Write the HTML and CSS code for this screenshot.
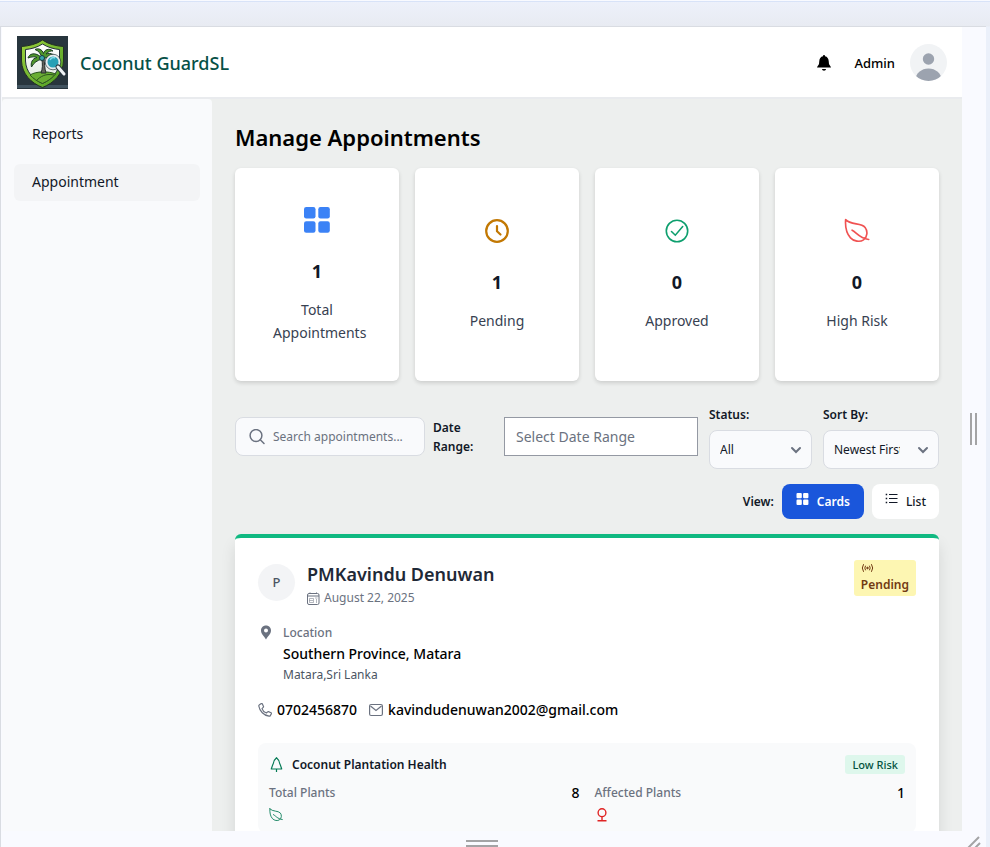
FILE: index.html
```html
<!DOCTYPE html>
<html lang="en">
<head>
<meta charset="utf-8">
<title>Coconut GuardSL - Manage Appointments</title>
<link rel="stylesheet" href="styles.css">
</head>
<body>
<svg class="defs" aria-hidden="true">
  <symbol id="leaf" viewBox="0 0 16 16"><path d="M1 1C.7 5 1.500 9.500 4 12.200C6 14.400 9.800 15 12 13.500C14.500 11.700 14.700 8 13 5.800C10.500 2.800 4.200 4.500 1 1ZM5 7.500C7.500 8.600 9.200 12.300 15.200 13.200" fill="none" stroke="currentColor" stroke-linecap="round" stroke-linejoin="round"/></symbol>
  <symbol id="grid" viewBox="0 0 14 14"><g fill="currentColor"><rect x="0" y="0" width="6.200" height="6.200" rx="1.200"/><rect x="7.700" y="0" width="6.200" height="6.200" rx="1.200"/><rect x="0" y="7.700" width="6.200" height="6.200" rx="1.200"/><rect x="7.700" y="7.700" width="6.200" height="6.200" rx="1.200"/></g></symbol>
</svg>
<div class="frame">
  <div class="app">
    <header class="topbar">
      <svg class="logo" viewBox="0 0 51 53" role="img" aria-label="Coconut GuardSL logo">
        <defs>
          <linearGradient id="rim" x1="0" y1="0" x2="1" y2="1"><stop offset="0" stop-color="#9bd23c"/><stop offset="1" stop-color="#4c9a25"/></linearGradient>
          <linearGradient id="sky" x1="0" y1="0" x2="0" y2="1"><stop offset="0" stop-color="#fff"/><stop offset="1" stop-color="#dfe8df"/></linearGradient>
        </defs>
        <rect width="51" height="53" fill="#28353d"/>
        <rect y="49" width="51" height="3" fill="#41535f"/>
        <path d="M25.500 4C20 8 12 10 4.500 10.500V25C5 38 14 47 25.500 51.500C37 47 46 38 46.500 25V10.500C39 10 31 8 25.500 4Z" fill="url(#rim)" stroke="#223023"/>
        <path d="M25.500 8C20 11.500 14 13 8.500 13.500V25C9 36 16 43 25.500 47.500C35 43 42 36 42.500 25V13.500C37 13 31 11.500 25.500 8Z" fill="url(#sky)" stroke="#23303a"/>
        <path d="M13 39C19 35 32 35 38.500 38C35.500 42 31 45 25.500 47.500C20.500 45.500 16 42.500 13 39Z" fill="#69ad33" stroke="#2c551f"/>
        <path d="M20 44C26 38 32 38 37 39" fill="none" stroke="#2c551f"/>
        <path d="M24.500 22C26 28 25.500 33 24 37H29C27.500 32 27.500 27 27 22Z" fill="#65645f" stroke="#252e2b"/>
        <path d="M25 22C18 15 12 18 11 22C15 20.500 18 20.500 20 21.500C15 22.500 13.500 27 14.500 31C17 26.500 20 24.500 25 23C30 21 36 21 39 25C39 19 34 16 29 18C31 15.500 34 14.500 36 15C32 11.500 27 14 26.500 17.500C25 13 21 12 18 13.500C22 15 24 18 25 22Z" fill="#4f962b" stroke="#1d3d27"/>
        <circle cx="25" cy="22" r="2.500" fill="#36a5ad" stroke="#173a3e"/>
        <circle cx="36" cy="26" r="6.500" fill="#28a0b6" stroke="#e5ecee" stroke-width="2"/>
        <circle cx="36" cy="26" r="7.800" fill="none" stroke="#29373e" stroke-width=".7"/>
        <path d="M33 24C34 22 36 21 38 22" fill="none" stroke="#83dbe7" stroke-width="1.500"/>
        <path d="M41 31L47 38" stroke="#28343d" stroke-width="5" stroke-linecap="round"/><path d="M41 31L47 38" stroke="#eff3f5" stroke-width="3" stroke-linecap="round"/>
      </svg>
      <span class="brand">Coconut GuardSL</span>
      <button class="bell" aria-label="Notifications"><svg viewBox="0 0 14 16"><path d="M7 0C7.600 0 8 .5 8 1.300C10.400 1.800 11.500 3.700 11.700 6L12 9C12.200 10 14 11.500 14 12.500H0C0 11.500 1.800 10 2 9L2.300 6C2.500 3.700 3.600 1.800 6 1.300C6 .5 6.400 0 7 0ZM5 14H9C9 16.300 5 16.300 5 14Z"/></svg></button>
      <span class="user">Admin</span>
      <svg class="avatar" viewBox="0 0 37 37" role="img" aria-label="Profile"><defs><clipPath id="round"><circle cx="18.500" cy="18.500" r="18.500"/></clipPath></defs><g clip-path="url(#round)"><rect width="37" height="37" fill="#f1f3f5"/><circle cx="18.500" cy="15" r="5.700" fill="#9ca3af"/><ellipse cx="18.500" cy="36" rx="13" ry="11.500" fill="#9ca3af"/></g></svg>
    </header>
    <div class="body">
      <nav class="sidebar">
        <a href="#reports">Reports</a>
        <a href="#appointment" class="active">Appointment</a>
      </nav>
      <main class="main">
        <h1>Manage Appointments</h1>
        <section class="stats">
          <div class="stat"><svg class="blue"><use href="#grid"/></svg><strong>1</strong><span>Total Appointments</span></div>
          <div class="stat"><svg class="amber" viewBox="0 0 26 26" fill="none" stroke="currentColor"><circle cx="13" cy="13" r="10.800" stroke-width="2.200"/><path d="M13 8V13.300L16.500 16.500" stroke-width="2.200" stroke-linecap="round" stroke-linejoin="round"/></svg><strong>1</strong><span>Pending</span></div>
          <div class="stat"><svg class="green" viewBox="0 0 26 26" fill="none" stroke="currentColor" stroke-width="1.600"><circle cx="13" cy="13" r="10.700"/><path d="M7.500 13.500L11.300 17.200L18.700 8.500" stroke-linecap="round"/></svg><strong>0</strong><span>Approved</span></div>
          <div class="stat"><svg class="red"><use href="#leaf"/></svg><strong>0</strong><span>High Risk</span></div>
        </section>
        <section class="filters">
          <label class="search"><svg viewBox="0 0 16 16" fill="none" stroke="currentColor" stroke-width="1.500" stroke-linecap="round"><circle cx="7" cy="6.500" r="5.900"/><path d="M11.300 10.800L15 14.500"/></svg><input type="text" placeholder="Search appointments..." aria-label="Search appointments"></label>
          <label class="range-label" for="range">Date Range:</label>
          <input class="range" id="range" type="text" placeholder="Select Date Range">
          <div class="field status"><label for="status">Status:</label><div class="select"><select id="status"><option>All</option></select><svg viewBox="0 0 10 6"><path d="M1 1L5 5L9 1"/></svg></div></div>
          <div class="field sort"><label for="sort">Sort By:</label><div class="select"><select id="sort"><option>Newest First</option></select><svg viewBox="0 0 10 6"><path d="M1 1L5 5L9 1"/></svg></div></div>
        </section>
        <div class="views">
          <span>View:</span>
          <button class="cards"><svg><use href="#grid"/></svg>Cards</button>
          <button class="list"><svg viewBox="0 0 13 12" stroke="currentColor"><path d="M4 1.500H12.500M4 5.500H12.500M4 9.500H12.500" stroke-width="1"/><path d="M.7 1.500H2.200M.7 5.500H2.200M.7 9.500H2.200" stroke-width="1.600"/></svg>List</button>
        </div>
        <article class="card">
          <div class="person">
            <div class="initial">P</div>
            <div class="who">
              <h2>PMKavindu Denuwan</h2>
              <p><svg viewBox="0 0 13 13" fill="none" stroke="currentColor"><rect x=".5" y="1.500" width="11.500" height="11" rx="1.500"/><path d="M.5 4H12M3 .5V2M9.500 .5V2"/><path d="M2.500 6.500H6.500V10.500H2.500ZM8 6H10.500M9.500 7V11M2.500 8.500H6" stroke-opacity=".5"/></svg>August 22, 2025</p>
            </div>
            <div class="badge"><svg viewBox="0 0 13 10" fill="none" stroke="currentColor"><circle cx="6.500" cy="5" r=".8" fill="currentColor"/><path d="M4.600 2.700Q3 5 4.600 7.300M8.400 2.700Q10 5 8.400 7.300M2.600 1.200Q0 5 2.600 8.800M10.400 1.200Q13 5 10.400 8.800"/></svg>Pending</div>
          </div>
          <div class="location">
            <svg viewBox="0 0 12 15"><path fill="currentColor" fill-rule="evenodd" d="M6 .5C9 .5 11 2.700 11 5.500C11 9 8 11 6 14.500C4 11 1 9 1 5.500C1 2.700 3 .5 6 .5ZM6 3.500A2 2 0 1 0 6 7.500A2 2 0 1 0 6 3.500Z"/></svg>
            <div><p class="caption">Location</p><p class="place">Southern Province, Matara</p><p class="city">Matara,Sri Lanka</p></div>
          </div>
          <div class="contact">
            <span><svg viewBox="0 0 14 14" fill="none" stroke="currentColor" stroke-width="1.200" stroke-linejoin="round"><path d="M1.500 1.700L3.300 .6Q4 .3 4.400 1L5.500 3.500Q5.700 4 5.200 4.400L4 5.600C4.600 7.500 6.500 9.400 8.400 10L9.600 8.800Q10 8.400 10.500 8.600L13 9.700Q13.600 10 13.400 10.700L12.300 12.600Q11.900 13.300 11 13.200C6 12.500 1.500 8 .8 3Q.7 2.200 1.500 1.700Z"/></svg>0702456870</span>
            <span><svg viewBox="0 0 14 14" fill="none" stroke="currentColor" stroke-width="1.200"><rect x=".6" y="1.500" width="12.800" height="11" rx="1.500"/><path d="M1.500 3L7 7.500L12.500 3"/></svg>kavindudenuwan2002@gmail.com</span>
          </div>
          <section class="health">
            <div class="health-head">
              <svg viewBox="0 0 12 15" fill="none" stroke="currentColor" stroke-width="1.200" stroke-linejoin="round"><path d="M6 .7C7 1.500 8.800 4.500 9.200 6.500C9.600 7.200 10.600 10 11.200 12H.8C1.400 10 2.400 7.200 2.800 6.500C3.200 4.500 5 1.500 6 .7ZM6 12V15"/></svg>
              <h3>Coconut Plantation Health</h3>
              <span class="risk">Low Risk</span>
            </div>
            <dl>
              <div><dt>Total Plants</dt><dd>8</dd><svg class="pine"><use href="#leaf"/></svg></div>
              <div><dt>Affected Plants</dt><dd>1</dd><svg class="crimson" viewBox="0 0 14 14" fill="none" stroke="currentColor" stroke-width="1.400"><circle cx="7" cy="4.700" r="3.900"/><path d="M7 8.600V12.700M2.500 12.700H11.500"/></svg></div>
            </dl>
          </section>
        </article>
      </main>
    </div>
  </div>
  <div class="gutter side"><svg class="grip" viewBox="0 0 8 32"><path d="M1 0V32M6 0V32"/></svg></div>
  <div class="gutter"><svg class="grip flat" viewBox="0 0 32 8"><path d="M0 2H32M0 7H32"/></svg></div>
  <div class="gutter"><svg class="grip corner" viewBox="0 0 16 16"><path d="M1 14L13 2M7 15L14 8"/></svg></div>
</div>
</body>
</html>
```
FILE: styles.css
```css
* { box-sizing: border-box; }
body { margin: 0; height: 100vh; overflow: hidden; background: linear-gradient(#edf1fb, #e8ebf2 26px, #ebf0fa 27px); box-shadow: inset 0 1px #f8faff, inset 0 2px #d8e3f8; font-family: "Noto Sans", sans-serif; color: #111827; font-size: 14px; }
h1, h2, h3, p, dl, dd, dt { margin: 0; }
button, input, select { font: inherit; color: inherit; }
svg { display: block; flex: none; }
.defs { position: absolute; width: 0; height: 0; }
.frame { margin: 26px 4px 0 0; height: calc(100vh - 18px); display: grid; grid-template: minmax(0, 1fr) 24px / minmax(0, 1fr) 24px; background: #f9faff; border: solid #d9dce2; border-width: 1px 0 0 1px; }
.app { overflow: hidden; display: flex; flex-direction: column; background: #edefee; border-left: 1px solid #f9faff; }
.gutter { display: flex; align-items: center; justify-content: center; }
.grip { width: 8px; height: 32px; fill: none; stroke: #a3a3a5; stroke-width: 2; }
.flat { width: 32px; height: 8px; }
.corner { width: 16px; height: 16px; }

.topbar { flex: none; height: 72px; display: flex; align-items: center; padding: 1px 15px 0; background: #fff; border-bottom: 2px solid #e9ebee; }
.logo { width: 51px; height: 53px; }
.brand { margin-left: 12px; margin-right: auto; font-size: 18px; font-weight: 500; color: #065046; }
.bell { border: 0; padding: 0; background: none; }
.bell svg { width: 14px; height: 16px; }
.user { margin: 0 15px 0 23px; font-size: 13px; font-weight: 500; color: #000; }
.avatar { width: 37px; height: 37px; }
.body { flex: 1; min-height: 0; display: flex; }
.sidebar { flex: none; width: 210px; padding: 17px 12px; display: flex; flex-direction: column; gap: 11px; background: #f9fafc; border-radius: 4px 4px 0 0; }
.sidebar a { height: 37px; padding: 0 18px; line-height: 36px; border-radius: 6px; color: #111827; text-decoration: none; }
.sidebar .active { background: #f3f4f6; }
.main { flex: 1; min-width: 0; padding: 22px 23px; }
h1 { font-size: 22px; font-weight: 600; line-height: 32px; color: #000; margin-bottom: 15px; }

.stats { display: grid; grid-template-columns: repeat(4, minmax(0, 1fr)); gap: 16px; }
.stat { min-height: 213px; padding: 0 38px; display: flex; flex-direction: column; justify-content: center; background: #fff; border-radius: 6px; box-shadow: 0 2px 4px rgba(0, 0, 0, .14); }
.stat svg { width: 26px; height: 28px; align-self: center; }
.stat strong { margin: 23px 0 13px; font-size: 18px; line-height: 28px; text-align: center; }
.stat span { line-height: 23px; color: #374151; text-align: center; }
.blue { color: #3b82f6; }
.amber { color: #c27803; }
.green { color: #0e9f6e; }
.red { color: #f05252; }

.filters { display: flex; align-items: center; margin-top: 23px; font-size: 12px; }
.filters input::placeholder { color: #6b7280; opacity: 1; }
.search { flex: 1; min-width: 0; height: 39px; display: flex; align-items: center; gap: 8px; padding: 0 13px; border: 1px solid #d9dce2; border-radius: 8px; background: #f9fafc; color: #6b7280; }
.search svg { width: 16px; height: 16px; }
.search input { flex: 1; min-width: 0; border: 0; padding: 0; background: none; outline: 0; }
.range-label { width: 60px; margin: 0 11px 0 8px; line-height: 19px; font-weight: 600; }
.range { width: 194px; height: 39px; padding: 0 11px; border: 1px solid #9499a3; background: #fff; font-size: 14px; }
.field { margin-left: 11px; display: flex; flex-direction: column; gap: 5px; }
.field label { line-height: 21px; font-weight: 600; }
.status { width: 103px; }
.sort { width: 116px; }
.select { display: grid; align-items: center; }
.select > * { grid-area: 1 / 1; }
.select select { appearance: none; width: 100%; height: 39px; padding: 0 38px 0 10px; border: 1px solid #d9dce2; border-radius: 8px; background: #f9fafc; }
.select svg { width: 10px; height: 6px; margin-right: 11px; justify-self: end; overflow: visible; fill: none; stroke: #6b7280; stroke-width: 2; stroke-linecap: round; pointer-events: none; }

.views { display: flex; align-items: center; justify-content: flex-end; gap: 8px; margin: 15px 0; font-size: 12px; font-weight: 600; }
.views button { display: flex; gap: 8px; padding: 0 13px; border: 0; border-radius: 8px; line-height: 35px; }
.views svg { width: 13px; height: 12px; margin-top: 9px; }
.views .cards { padding: 0 14px; background: #1a56db; color: #fff; }
.list { background: #fff; font-weight: 500; }

.card { border-top: 4px solid #10b981; border-radius: 6px; padding: 22px 23px; background: #fff; box-shadow: 0 10px 15px rgba(0, 0, 0, .1); }
.person { display: flex; align-items: flex-start; gap: 12px; }
.initial { width: 37px; height: 37px; margin-top: 4px; border-radius: 50%; background: #f3f4f6; color: #4b5563; text-align: center; line-height: 37px; font-size: 13px; font-weight: 500; }
.who { flex: 1; }
h2 { font-size: 18px; font-weight: 600; line-height: 28px; color: #1f2937; }
.who p { display: flex; align-items: center; gap: 4px; font-size: 12px; line-height: 20px; color: #6b7280; }
.who svg { width: 13px; height: 13px; }
.badge { padding: 3px 7px 0; border-radius: 3px; background: #fdf6b2; color: #723b13; font-size: 12px; font-weight: 600; line-height: 23px; }
.badge svg { width: 13px; height: 10px; }
.location { display: flex; margin-top: 15px; gap: 9px; font-size: 12px; line-height: 20px; color: #4b5563; }
.location svg { width: 16px; height: 15px; margin-top: 2px; color: #6b7280; }
.caption { font-weight: 500; color: #6b7280; }
.place { font-size: 14px; line-height: 22px; font-weight: 500; color: #000; }
.contact { display: flex; gap: 12px; margin-top: 14px; font-size: 14px; font-weight: 500; line-height: 22px; color: #000; }
.contact span { display: flex; align-items: center; gap: 5px; }
.contact svg { width: 14px; height: 14px; color: #6b7280; }
.health { margin-top: 22px; padding: 11px; background: #f9fafb; border-radius: 8px; }
.health-head { display: flex; align-items: center; }
.health-head svg { width: 15px; height: 15px; margin-right: 8px; color: #057a55; }
h3 { flex: 1; font-size: 12px; font-weight: 600; line-height: 21px; }
.risk { padding: 0 7px; border-radius: 3px; background: #def7ec; color: #03543f; font-size: 11px; font-weight: 500; line-height: 19px; }
dl { display: grid; grid-template-columns: 1fr 1fr; gap: 15px; margin-top: 7px; }
dl div { display: grid; grid-template-columns: 1fr auto; gap: 4px; align-items: center; font-weight: 500; }
dt { font-size: 12px; line-height: 22px; color: #6b7280; }
dd { line-height: 22px; color: #000; }
dl svg { width: 14px; height: 14px; }
.pine { color: #057a55; }
.crimson { color: #e02424; }
```
